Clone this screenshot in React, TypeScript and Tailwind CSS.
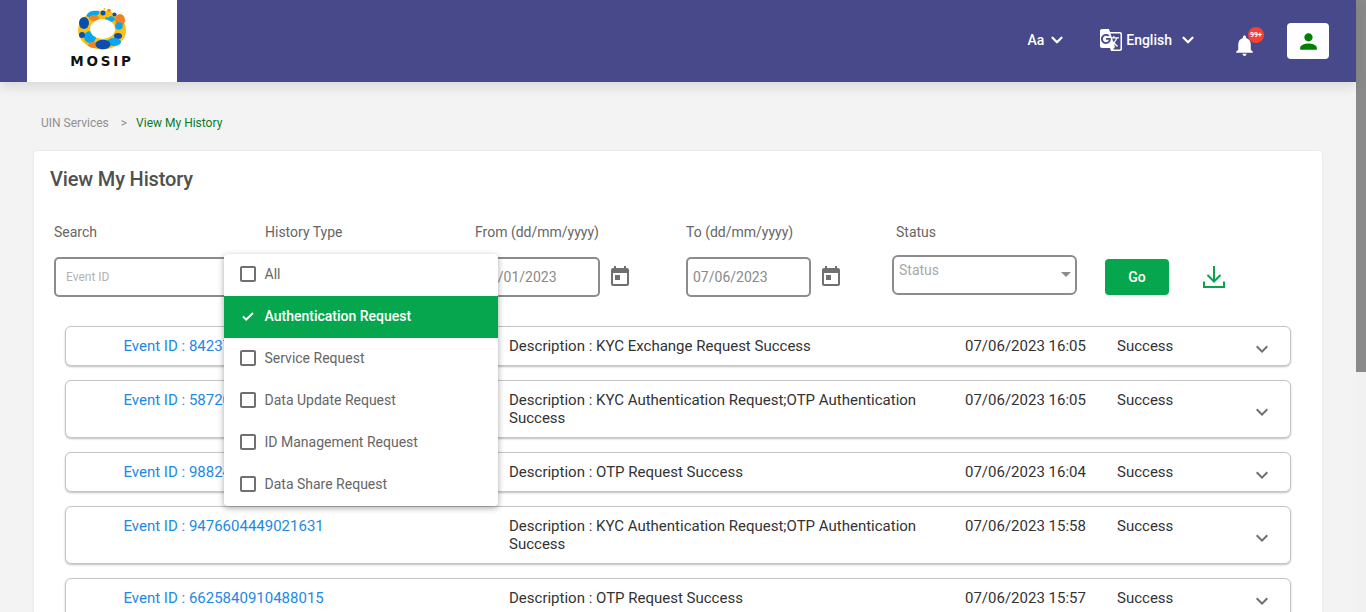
import { ChevronDown } from "lucide-react";
import {
  MdGTranslate,
  MdKeyboardArrowDown,
  MdNotifications,
  MdPerson,
  MdToday,
} from "react-icons/md";

const HISTORY_TYPES = [
  { label: "All" },
  { label: "Authentication Request", checked: true },
  { label: "Service Request" },
  { label: "Data Update Request" },
  { label: "ID Management Request" },
  { label: "Data Share Request" },
];

const ROWS = [
  { id: "8423714092356180", desc: "KYC Exchange Request Success", date: "07/06/2023 16:05" },
  { id: "5872016394410275", desc: "KYC Authentication Request;OTP Authentication Success", date: "07/06/2023 16:05" },
  { id: "9882461037725904", desc: "OTP Request Success", date: "07/06/2023 16:04" },
  { id: "9476604449021631", desc: "KYC Authentication Request;OTP Authentication Success", date: "07/06/2023 15:58" },
  { id: "6625840910488015", desc: "OTP Request Success", date: "07/06/2023 15:57" },
];

function Logo() {
  return (
    <svg width="60" height="46" viewBox="72 6 60 46">
      <ellipse cx="102" cy="30" rx="24" ry="19.5" fill="#fdc010" />
      <ellipse cx="93" cy="14" rx="6.5" ry="3" fill="#08a7f0" transform="rotate(-15 93 14)" />
      <ellipse cx="94" cy="18" rx="5" ry="3" fill="#f58220" />
      <ellipse cx="84" cy="23" rx="5" ry="6" fill="#0a4fb0" />
      <ellipse cx="120" cy="20" rx="5" ry="6" fill="#f58220" />
      <ellipse cx="110" cy="19" rx="5" ry="3" fill="#08a7f0" />
      <circle cx="119" cy="26" r="3.8" fill="#08a7f0" />
      <ellipse cx="118" cy="36" rx="4" ry="3" fill="#0a4fb0" />
      <ellipse cx="114" cy="42" rx="7" ry="4" fill="#08a7f0" />
      <circle cx="90" cy="37" r="6" fill="#08a7f0" />
      <ellipse cx="94" cy="45" rx="6" ry="3" fill="#f58220" />
      <ellipse cx="103" cy="44.5" rx="7.5" ry="4.8" fill="#0a4fb0" />
      <circle cx="82" cy="35" r="3" fill="#0a4fb0" />
      <ellipse cx="102.5" cy="29" rx="12.5" ry="10" fill="#ffffff" />
      <circle cx="103" cy="13" r="2.5" fill="#0a4fb0" />
      <circle cx="109" cy="10.5" r="1.8" fill="#f58220" />
      <circle cx="104.5" cy="9" r="1" fill="#fdc010" />
      <circle cx="114.5" cy="14.5" r="2" fill="#0a4fb0" />
      <circle cx="108" cy="15.5" r="2" fill="#fdc010" />
    </svg>
  );
}

function Header() {
  return (
    <header className="relative z-10 flex h-[82px] shrink-0 items-start bg-[#47498a] pl-[27px] pr-[27px] shadow-[0_4px_12px_rgba(0,0,0,0.12)]">
      <div className="flex h-[82px] w-[150px] flex-col items-center bg-white pt-[6px]">
        <Logo />
        <span className="mt-[2px] text-[13.5px] leading-[14px] font-bold tracking-[2.8px] text-[#111] [font-family:'DejaVu_Sans',sans-serif]">
          MOSIP
        </span>
      </div>
      <div className="ml-auto flex h-[82px] items-start text-white">
        <div className="mt-[31px] flex items-center text-[14px] leading-[18px] font-medium">
          <span>Aa</span>
          <ChevronDown size={18} strokeWidth={3} className="ml-[4px]" />
        </div>
        <div className="mt-[31px] ml-[33px] flex items-center text-[14px] leading-[18px] font-medium">
          <MdGTranslate size={24} className="-my-1" />
          <span className="ml-[3px]">English</span>
          <ChevronDown size={18} strokeWidth={3} className="ml-[7px]" />
        </div>
        <div className="relative mt-[33px] ml-[35px] h-6 w-6">
          <MdNotifications size={25} />
          <span className="absolute -top-[6px] left-[16px] flex h-4 w-4 items-center justify-center rounded-full bg-[#f44336] text-[7px] font-bold text-white">
            99+
          </span>
        </div>
        <div className="mt-[23px] ml-[31px] flex h-9 w-[42px] items-center justify-center rounded bg-white">
          <MdPerson size={25} className="text-[#008000]" />
        </div>
      </div>
    </header>
  );
}

function DateField({ value, className }: { value: string; className: string }) {
  return (
    <div className={`${className} shrink-0`}>
      <div className="mb-[16px] text-[14px] leading-[18px] text-[#666]">
        {value === "01" ? "From (dd/mm/yyyy)" : "To (dd/mm/yyyy)"}
      </div>
      <div className="flex items-center">
        <div className="flex h-10 w-[125px] items-center rounded-[5px] border-2 border-[#8c8c8c] pl-[5px] text-[14px] text-[#8a8a8a]">
          {value === "01" ? "07/01/2023" : "07/06/2023"}
        </div>
        <MdToday size={24} className="ml-[8px] text-[#707070]" />
      </div>
    </div>
  );
}

function Filters() {
  return (
    <div className="mt-[32px] flex pl-[20px]">
      <div className="w-[211px] shrink-0">
        <div className="mb-[16px] text-[14px] leading-[18px] text-[#666]">Search</div>
        <div className="flex h-10 w-[190px] items-center rounded-[5px] border-2 border-[#8c8c8c] pl-[10px] text-[12px] text-[#b3b3b3]">
          Event ID
        </div>
      </div>
      <div className="w-[210px] shrink-0 text-[14px] leading-[18px] text-[#666]">History Type</div>
      <DateField value="01" className="w-[211px]" />
      <DateField value="06" className="w-[206px]" />
      <div className="w-[185px] shrink-0">
        <div className="mb-[14px] ml-[4px] text-[14px] leading-[18px] text-[#666]">Status</div>
        <div className="relative h-10 rounded-[6px] border-2 border-[#8c8c8c] pl-[5px] pt-[4px] text-[14px] leading-[18px] text-[#a8a8a8]">
          Status
          <span className="absolute top-[15px] right-[4px] h-0 w-0 border-x-[5px] border-t-[5px] border-x-transparent border-t-[#8c8c8c]" />
        </div>
      </div>
      <button className="mt-[36px] ml-[28px] h-9 w-16 rounded bg-[#06a64f] text-[14px] font-medium text-white">
        Go
      </button>
      <svg width="24" height="24" viewBox="0 0 24 24" fill="none" stroke="#06a64f" strokeWidth="2" className="mt-[42px] ml-[33px]">
        <path d="M12 1v15M5.5 10l6.5 6.5L18.5 10M2 16.5V22h20v-5.5" />
      </svg>
    </div>
  );
}

function HistoryRow({ id, desc, date }: { id: string; desc: string; date: string }) {
  return (
    <div className="grid grid-cols-[385.5px_456px_152px_1fr_40px] rounded-md border border-[#c6c6c6] bg-white py-[10px] pl-[57.5px] text-[15px] leading-[18px] shadow-[0_1px_2px_rgba(0,0,0,0.25)]">
      <div className="text-[#1e88e5]">Event ID : {id}</div>
      <div className="w-[420px] text-[#333]">Description : {desc}</div>
      <div className="text-[#333]">{date}</div>
      <div className="text-[#333]">Success</div>
      <MdKeyboardArrowDown size={24} className="-my-2 self-center translate-y-[3px] text-[#707070]" />
    </div>
  );
}

function HistoryTypeMenu() {
  return (
    <div className="absolute top-[103px] left-[190px] z-20 w-[274px] rounded bg-white shadow-[0_2px_6px_rgba(0,0,0,0.35)]">
      {HISTORY_TYPES.map((item) =>
        item.checked ? (
          <div key={item.label} className="flex h-[42px] items-center bg-[#06a64f] pb-[2px] pl-[16px] text-[14px] font-medium text-white">
            <svg width="16" height="16" viewBox="0 0 16 16" fill="none" stroke="currentColor" strokeWidth="2">
              <path d="M3 8.5l3.2 3.2L13 5" />
            </svg>
            <span className="ml-[8.5px]">{item.label}</span>
          </div>
        ) : (
          <div key={item.label} className="flex h-[42px] items-center pb-[2px] pl-[16px] text-[14px] text-[#666]">
            <span className="h-4 w-4 rounded-[2px] border-2 border-[#707070]" />
            <span className="ml-[8.5px]">{item.label}</span>
          </div>
        ),
      )}
    </div>
  );
}

export default function App() {
  return (
    <div className="flex h-screen overflow-hidden bg-[#f3f3f3] [font-family:Roboto,sans-serif]">
      <main className="flex min-w-0 flex-1 flex-col">
        <Header />
        <div className="mt-[33px] ml-[41px] flex text-[12px] leading-4">
          <span className="text-[#8f8f8f]">UIN Services</span>
          <span className="ml-[12px] text-[#8f8f8f]">&gt;</span>
          <span className="ml-[9px] text-[#0b7a2a]">View My History</span>
        </div>
        <section className="relative mx-[34px] mt-[20px] flex-1 rounded-t bg-white pt-[16px] shadow-[0_0_3px_rgba(0,0,0,0.08)]">
          <h1 className="pl-[16px] text-[20px] leading-6 font-medium tracking-[-0.15px] text-[#505050]">View My History</h1>
          <Filters />
          <div className="mx-[31px] mt-[29px] flex flex-col gap-[14px]">
            {ROWS.map((row) => (
              <HistoryRow key={row.id} {...row} />
            ))}
          </div>
          <HistoryTypeMenu />
        </section>
      </main>
      <aside className="w-[10px] shrink-0 bg-[#f1f1f1]">
        <div className="h-[372px] bg-[#8a8a8a]" />
      </aside>
    </div>
  );
}
